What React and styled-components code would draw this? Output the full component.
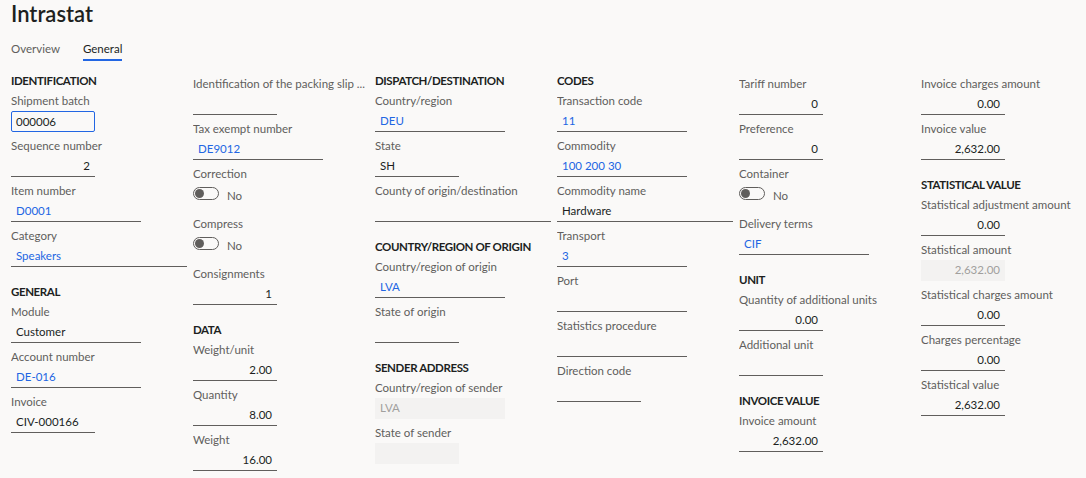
import React from 'react';
import styled, { createGlobalStyle } from 'styled-components';

const GlobalStyle = createGlobalStyle`
  body {
    margin: 0;
    background-color: #faf9f8;
    font-family: "Segoe UI", Lato, "Open Sans", sans-serif;
    color: #323130;
  }
`;

const Page = styled.div`
  padding: 0 11px;
`;

const Title = styled.h1`
  margin: 0;
  font-size: 22px;
  line-height: 27px;
  font-weight: 600;
  color: #201f1e;
`;

const Tabs = styled.div`
  display: flex;
  gap: 23px;
  margin-top: 12px;
`;

const Tab = styled.div`
  font-size: 11.5px;
  line-height: 20px;
  color: ${(p) => (p.$active ? '#201f1e' : '#605e5c')};
  border-bottom: 2px solid ${(p) => (p.$active ? '#2266e3' : 'transparent')};
`;

const Grid = styled.div`
  display: grid;
  grid-template-columns: repeat(6, 182px);
  margin-top: 10px;
  align-items: start;
`;

const Column = styled.div`
  display: flex;
  flex-direction: column;
`;

const Group = styled.section`
  padding-top: ${(p) => (p.$noHeader ? '3px' : '0')};
  & + & {
    margin-top: 11px;
  }
`;

const GroupHeader = styled.h2`
  margin: 0;
  font-size: 11.5px;
  line-height: 20px;
  font-weight: 700;
  letter-spacing: -0.4px;
  color: #201f1e;
`;

const Field = styled.div`
  margin-bottom: 4px;
`;

const Label = styled.div`
  max-width: 176px;
  overflow: hidden;
  text-overflow: ellipsis;
  font-size: 11.5px;
  line-height: 20px;
  color: #605e5c;
  white-space: nowrap;
`;

const widths = { s: '84px', m: '130px', l: '176px' };

const Input = styled.div`
  box-sizing: border-box;
  width: ${(p) => widths[p.$size]};
  height: 21px;
  padding: 0 5px;
  font-size: 11.5px;
  line-height: 20px;
  text-align: ${(p) => (p.$num ? 'right' : 'left')};
  white-space: nowrap;
  color: ${(p) =>
    p.$kind === 'link' ? '#2266e3' : p.$kind === 'disabled' ? '#a19f9d' : '#201f1e'};
  background: ${(p) => (p.$kind === 'disabled' ? '#f3f2f1' : 'transparent')};
  border-bottom: 1px solid ${(p) => (p.$kind === 'disabled' ? 'transparent' : '#605e5c')};
  ${(p) =>
    p.$kind === 'focused' &&
    `
    border: 1px solid #2266e3;
    border-radius: 2px;
    line-height: 19px;
    padding-left: 4px;
  `}
`;

const ToggleRow = styled.div`
  display: flex;
  align-items: flex-start;
  gap: 8px;
  height: 26px;
`;

const Track = styled.span`
  box-sizing: border-box;
  display: inline-flex;
  align-items: center;
  width: 26px;
  height: 13px;
  margin-top: 3px;
  padding: 0 1px;
  border: 1px solid #605e5c;
  border-radius: 7px;
`;

const Knob = styled.span`
  width: 9px;
  height: 9px;
  border-radius: 50%;
  background: #605e5c;
`;

const ToggleText = styled.span`
  margin-top: 2px;
  font-size: 11.5px;
  line-height: 20px;
  color: #605e5c;
`;

const columns = [
  [
    {
      header: 'IDENTIFICATION',
      fields: [
        { label: 'Shipment batch', value: '000006', size: 's', kind: 'focused' },
        { label: 'Sequence number', value: '2', size: 's', num: true },
        { label: 'Item number', value: 'D0001', size: 'm', kind: 'link' },
        { label: 'Category', value: 'Speakers', size: 'l', kind: 'link' },
      ],
    },
    {
      header: 'GENERAL',
      fields: [
        { label: 'Module', value: 'Customer', size: 'm' },
        { label: 'Account number', value: 'DE-016', size: 'm', kind: 'link' },
        { label: 'Invoice', value: 'CIV-000166', size: 's' },
      ],
    },
  ],
  [
    {
      fields: [
        { label: 'Identification of the packing slip ...', value: '', size: 's' },
        { label: 'Tax exempt number', value: 'DE9012', size: 'm', kind: 'link' },
        { label: 'Correction', toggle: true },
        { label: 'Compress', toggle: true },
        { label: 'Consignments', value: '1', size: 's', num: true },
      ],
    },
    {
      header: 'DATA',
      fields: [
        { label: 'Weight/unit', value: '2.00', size: 's', num: true },
        { label: 'Quantity', value: '8.00', size: 's', num: true },
        { label: 'Weight', value: '16.00', size: 's', num: true },
      ],
    },
  ],
  [
    {
      header: 'DISPATCH/DESTINATION',
      fields: [
        { label: 'Country/region', value: 'DEU', size: 'm', kind: 'link' },
        { label: 'State', value: 'SH', size: 's' },
        { label: 'County of origin/destination', value: '', size: 'l' },
      ],
    },
    {
      header: 'COUNTRY/REGION OF ORIGIN',
      fields: [
        { label: 'Country/region of origin', value: 'LVA', size: 'm', kind: 'link' },
        { label: 'State of origin', value: '', size: 's' },
      ],
    },
    {
      header: 'SENDER ADDRESS',
      fields: [
        { label: 'Country/region of sender', value: 'LVA', size: 'm', kind: 'disabled' },
        { label: 'State of sender', value: '', size: 's', kind: 'disabled' },
      ],
    },
  ],
  [
    {
      header: 'CODES',
      fields: [
        { label: 'Transaction code', value: '11', size: 'm', kind: 'link' },
        { label: 'Commodity', value: '100 200 30', size: 'm', kind: 'link' },
        { label: 'Commodity name', value: 'Hardware', size: 'l' },
        { label: 'Transport', value: '3', size: 'm', kind: 'link' },
        { label: 'Port', value: '', size: 'm' },
        { label: 'Statistics procedure', value: '', size: 'm' },
        { label: 'Direction code', value: '', size: 's' },
      ],
    },
  ],
  [
    {
      fields: [
        { label: 'Tariff number', value: '0', size: 's', num: true },
        { label: 'Preference', value: '0', size: 's', num: true },
        { label: 'Container', toggle: true },
        { label: 'Delivery terms', value: 'CIF', size: 'm', kind: 'link' },
      ],
    },
    {
      header: 'UNIT',
      fields: [
        { label: 'Quantity of additional units', value: '0.00', size: 's', num: true },
        { label: 'Additional unit', value: '', size: 's' },
      ],
    },
    {
      header: 'INVOICE VALUE',
      fields: [{ label: 'Invoice amount', value: '2,632.00', size: 's', num: true }],
    },
  ],
  [
    {
      fields: [
        { label: 'Invoice charges amount', value: '0.00', size: 's', num: true },
        { label: 'Invoice value', value: '2,632.00', size: 's', num: true },
      ],
    },
    {
      header: 'STATISTICAL VALUE',
      fields: [
        { label: 'Statistical adjustment amount', value: '0.00', size: 's', num: true },
        { label: 'Statistical amount', value: '2,632.00', size: 's', num: true, kind: 'disabled' },
        { label: 'Statistical charges amount', value: '0.00', size: 's', num: true },
        { label: 'Charges percentage', value: '0.00', size: 's', num: true },
        { label: 'Statistical value', value: '2,632.00', size: 's', num: true },
      ],
    },
  ],
];

const FormField = ({ field }) => (
  <Field>
    <Label>{field.label}</Label>
    {field.toggle ? (
      <ToggleRow>
        <Track>
          <Knob />
        </Track>
        <ToggleText>No</ToggleText>
      </ToggleRow>
    ) : (
      <Input $size={field.size} $kind={field.kind} $num={field.num}>
        {field.value}
      </Input>
    )}
  </Field>
);

const App = () => (
  <Page>
    <GlobalStyle />
    <Title>Intrastat</Title>
    <Tabs>
      <Tab>Overview</Tab>
      <Tab $active>General</Tab>
    </Tabs>
    <Grid>
      {columns.map((groups, ci) => (
        <Column key={ci}>
          {groups.map((group, gi) => (
            <Group key={gi} $noHeader={!group.header}>
              {group.header && <GroupHeader>{group.header}</GroupHeader>}
              {group.fields.map((field) => (
                <FormField key={field.label} field={field} />
              ))}
            </Group>
          ))}
        </Column>
      ))}
    </Grid>
  </Page>
);

export default App;
